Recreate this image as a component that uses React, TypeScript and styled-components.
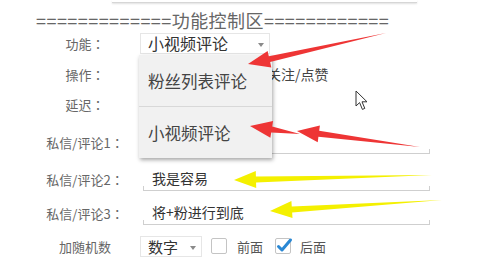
import styled, { createGlobalStyle } from "styled-components";

const GlobalStyle = createGlobalStyle`
    body {
        margin: 0;
        background: #ffffff;
        font-family: "Noto Sans CJK SC", "Noto Sans", sans-serif;
    }
`;

const Page = styled.div`
    position: relative;
    width: 500px;
    height: 278px;
    overflow: hidden;
    background: #ffffff;
`;

const TopField = styled.div`
    margin-left: 112px;
    width: 305px;
    height: 2px;
    border-bottom: 1px solid #d6d6d6;
    box-shadow: 0 1px 2px rgba(0, 0, 0, 0.12);
`;

const Header = styled.div`
    margin-top: 8px;
    padding-left: 36px;
    height: 18px;
    line-height: 18px;
    font-size: 18px;
    letter-spacing: 0.45px;
    color: #666;
    white-space: nowrap;
`;

const Row = styled.div<{ $h: number }>`
    display: grid;
    grid-template-columns: 30px 110px 1fr;
    align-items: center;
    height: ${props => props.$h}px;
`;

const Label = styled.div`
    grid-column: 2;
    text-align: center;
    font-family: "Noto Sans CJK TC", "Noto Sans CJK SC", sans-serif;
    font-size: 13px;
    color: #666;
    white-space: nowrap;
`;

const Controls = styled.div`
    grid-column: 3;
    display: flex;
    align-items: center;
`;

const Select = styled.div<{ $w: number; $size: number }>`
    position: relative;
    box-sizing: border-box;
    width: ${props => props.$w}px;
    height: 21px;
    padding-left: 7px;
    border: 1px solid #e6e6e6;
    background: #fff;
    font-size: ${props => props.$size}px;
    line-height: 19px;
    color: #333;
    &::after {
        content: "";
        position: absolute;
        right: 5px;
        top: 9px;
        border-left: 3px solid transparent;
        border-right: 3px solid transparent;
        border-top: 4px solid #8a8a8a;
    }
`;

const Plain = styled.span<{ $left: number }>`
    margin-left: ${props => props.$left}px;
    font-size: 14px;
    color: #444;
`;

const TextField = styled.div`
    box-sizing: border-box;
    width: 287px;
    height: 24px;
    margin-left: 3px;
    padding-left: 9px;
    font-size: 14px;
    line-height: 22px;
    color: #333;
    border-bottom: 1px solid #cfcfcf;
    background-image: linear-gradient(#cfcfcf, #cfcfcf), linear-gradient(#cfcfcf, #cfcfcf);
    background-size: 1px 4px;
    background-position: left bottom, right bottom;
    background-repeat: no-repeat;
`;

const Box = styled.span<{ $left: number }>`
    position: relative;
    box-sizing: border-box;
    width: 16px;
    height: 16px;
    margin-left: ${props => props.$left}px;
    border: 1px solid #c4c4c4;
    border-radius: 2px;
    background: #fff;
    svg {
        position: absolute;
        left: 0;
        top: -1px;
        overflow: visible;
    }
`;

const BoxText = styled.span<{ $left: number }>`
    margin-left: ${props => props.$left}px;
    font-size: 13px;
    color: #555;
`;

const Popup = styled.div`
    position: absolute;
    left: 139px;
    top: 55px;
    width: 133px;
    height: 103px;
    background: #f1f1f1;
    box-shadow: 1px 2px 4px rgba(0, 0, 0, 0.35);
`;

const PopupItem = styled.div<{ $line?: boolean }>`
    height: 51px;
    padding-left: 9px;
    display: flex;
    align-items: center;
    font-size: 16.5px;
    color: #444;
    border-bottom: ${props => (props.$line ? "1px solid #d8d8d8" : "none")};
`;

const Overlay = styled.svg`
    position: absolute;
    left: 0;
    top: 0;
    pointer-events: none;
`;

const Cursor = styled.svg`
    position: absolute;
    left: 355px;
    top: 90px;
`;

type P = [number, number];

function arrowPoints(tail: P, tip: P, shaft: number, headW: number, headL: number) {
    const dx = tip[0] - tail[0];
    const dy = tip[1] - tail[1];
    const len = Math.hypot(dx, dy);
    const ux = dx / len, uy = dy / len;
    const nx = -uy, ny = ux;
    const bx = tip[0] - ux * headL, by = tip[1] - uy * headL;
    const pts: P[] = [
        tail,
        [bx + nx * shaft / 2, by + ny * shaft / 2],
        [bx + nx * headW / 2, by + ny * headW / 2],
        tip,
        [bx - nx * headW / 2, by - ny * headW / 2],
        [bx - nx * shaft / 2, by - ny * shaft / 2],
    ];
    return pts.map(p => p.join(",")).join(" ");
}

const arrows: { tail: P; tip: P; color: string }[] = [
    { tail: [386, 33], tip: [248, 64], color: "#ee3535" },
    { tail: [300, 134], tip: [250, 126], color: "#ee3535" },
    { tail: [420, 147], tip: [297, 131], color: "#ee3535" },
    { tail: [432, 175], tip: [234, 180], color: "#f4f000" },
    { tail: [442, 200], tip: [270, 211], color: "#f4f000" },
];

function App() {
    return (
        <Page>
            <GlobalStyle />
            <TopField />
            <Header>=============功能控制区============</Header>

            <Row $h={29}>
                <Label>功能：</Label>
                <Controls>
                    <Select $w={130} $size={16}>小视频评论</Select>
                </Controls>
            </Row>
            <Row $h={32}>
                <Label>操作：</Label>
                <Controls>
                    <Plain $left={127}>关注/点赞</Plain>
                </Controls>
            </Row>
            <Row $h={28}>
                <Label>延迟：</Label>
                <Controls />
            </Row>
            <Row $h={48}>
                <Label>私信/评论1：</Label>
                <Controls>
                    <TextField />
                </Controls>
            </Row>
            <Row $h={26}>
                <Label>私信/评论2：</Label>
                <Controls>
                    <TextField>我是容易</TextField>
                </Controls>
            </Row>
            <Row $h={42}>
                <Label>私信/评论3：</Label>
                <Controls>
                    <TextField>将+粉进行到底</TextField>
                </Controls>
            </Row>
            <Row $h={24}>
                <Label>加随机数</Label>
                <Controls>
                    <Select $w={62} $size={15}>数字</Select>
                    <Box $left={9} />
                    <BoxText $left={10}>前面</BoxText>
                    <Box $left={12}>
                        <svg width="16" height="16" viewBox="0 0 16 16">
                            <path d="M2.5 8.5 L6 12 L14.5 2" fill="none" stroke="#2a88d4" strokeWidth="3" strokeLinecap="round" strokeLinejoin="round" />
                        </svg>
                    </Box>
                    <BoxText $left={9}>后面</BoxText>
                </Controls>
            </Row>

            <Popup>
                <PopupItem $line>粉丝列表评论</PopupItem>
                <PopupItem>小视频评论</PopupItem>
            </Popup>

            <Cursor width="16" height="22" viewBox="0 0 16 22">
                <path d="M1 1 L1 16 L4.6 12.6 L7.4 19.4 L9.8 18.4 L7 11.8 L12 11.8 Z" fill="#fff" stroke="#333" strokeWidth="1" strokeLinejoin="round" />
            </Cursor>

            <Overlay width="500" height="278">
                {arrows.map((a, i) => (
                    <polygon key={i} points={arrowPoints(a.tail, a.tip, 6, 17, 22)} fill={a.color} />
                ))}
            </Overlay>
        </Page>
    );
}

export default App;
